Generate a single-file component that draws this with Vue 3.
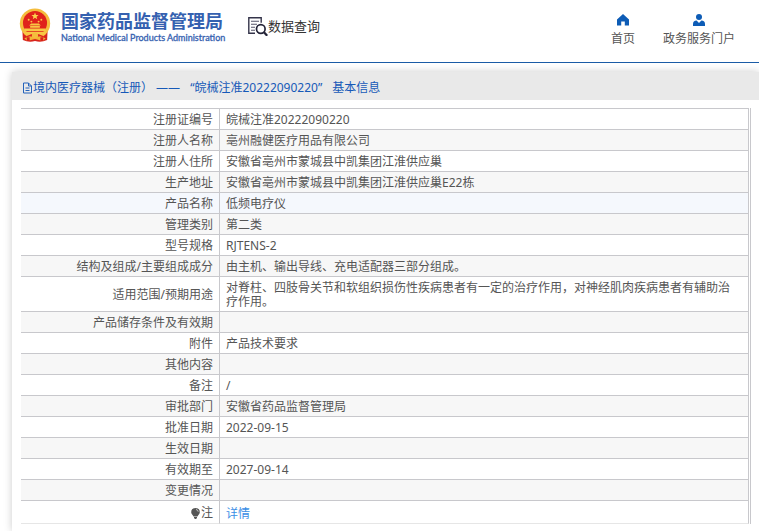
<script setup>
const rows = [
  { label: '注册证编号', value: '皖械注准20222090220' },
  { label: '注册人名称', value: '亳州融健医疗用品有限公司' },
  { label: '注册人住所', value: '安徽省亳州市蒙城县中凯集团江淮供应巢' },
  { label: '生产地址', value: '安徽省亳州市蒙城县中凯集团江淮供应巢E22栋' },
  { label: '产品名称', value: '低频电疗仪', active: true },
  { label: '管理类别', value: '第二类' },
  { label: '型号规格', value: 'RJTENS-2' },
  { label: '结构及组成/主要组成成分', value: '由主机、输出导线、充电适配器三部分组成。' },
  { label: '适用范围/预期用途', value: '对脊柱、四肢骨关节和软组织损伤性疾病患者有一定的治疗作用，对神经肌肉疾病患者有辅助治疗作用。' },
  { label: '产品储存条件及有效期', value: '' },
  { label: '附件', value: '产品技术要求' },
  { label: '其他内容', value: '' },
  { label: '备注', value: '/' },
  { label: '审批部门', value: '安徽省药品监督管理局' },
  { label: '批准日期', value: '2022-09-15' },
  { label: '生效日期', value: '' },
  { label: '有效期至', value: '2027-09-14' },
  { label: '变更情况', value: '' },
]
</script>

<template>
  <div class="page">
    <header class="header">
      <a class="brand" href="#">
        <svg class="emblem" viewBox="0 0 32 36" aria-hidden="true">
          <path d="M3 22L3.500 33Q10 36 16 34Q22 36 28.500 33L29 22Z" fill="#d8231c" />
          <circle cx="16" cy="16" r="15.600" fill="#f5bd3d" />
          <circle cx="16" cy="15.500" r="12.400" fill="#e0221b" />
          <path d="M16 4.600l1 2.500 2.700.1-2.100 1.700.7 2.600-2.300-1.500-2.300 1.500.7-2.600-2.100-1.700 2.700-.1z" fill="#fbd24e" />
          <g fill="#f8c744">
            <circle cx="9.500" cy="12" r="1" />
            <circle cx="12.300" cy="14" r="1" />
            <circle cx="19.700" cy="14" r="1" />
            <circle cx="22.500" cy="12" r="1" />
            <path d="M10 18l2-2h8l2 2zM11 18.600h10v1.600H11zM5 21h22v2.600H5z" />
            <path d="M4 24.500h24l-2 3H6z" />
          </g>
          <path d="M7 29l5-2h8l5 2-3 2-3-2h-6l-3 2z" fill="#e0221b" />
          <circle cx="16" cy="28.500" r="3.200" fill="#f5bd3d" />
          <path d="M5 31l6-2 5 2 5-2 6 2-3 3-8-2-8 2z" fill="#f3b535" />
          <path d="M9 30v4M23 30v4" stroke="#d8231c" stroke-width="3" />
        </svg>
        <span class="brand-text">
          <span class="brand-cn">国家药品监督管理局</span>
          <span class="brand-en">National Medical Products Administration</span>
        </span>
      </a>
      <a class="query" href="#">
        <svg class="query-icon" viewBox="0 0 20 20" aria-hidden="true">
          <path d="M7 17.200H.8V1.800h12.400v5" fill="none" stroke="#34344a" stroke-width="1.400" />
          <path d="M3 5.200h8M3 8.200h6M3 11.200h4M3 14.200h4" stroke="#55556a" stroke-width="1.100" />
          <circle cx="12.800" cy="13" r="4.300" fill="#fff" stroke="#242438" stroke-width="1.700" />
          <path d="M16 16.200l3.200 3.600" stroke="#242438" stroke-width="2.200" />
        </svg>
        <span>数据查询</span>
      </a>
      <nav class="nav">
        <a class="nav-item" href="#">
          <svg viewBox="0 0 12 12" aria-hidden="true">
            <path d="M6 0L12 5.400V11.400H7.800V7.400H4.200V11.400H0V5.400Z" fill="#0d5cb6" />
          </svg>
          <span>首页</span>
        </a>
        <a class="nav-item" href="#">
          <svg viewBox="0 0 12 12" aria-hidden="true">
            <circle cx="6" cy="3" r="3" fill="#0d5cb6" />
            <path d="M0 12V10Q0 7 3.600 6.600L6 9l2.400-2.400Q12 7 12 10v2z" fill="#0d5cb6" />
          </svg>
          <span>政务服务门户</span>
        </a>
      </nav>
    </header>

    <main class="panel">
      <h1 class="title">
        <svg class="title-icon" viewBox="0 0 11 12" aria-hidden="true">
          <path d="M1.500 1h5l3 3v7h-8zM6.500 1v3h3M3.500 6h4M3.500 8.500h4" fill="none" stroke="#2463bb" />
        </svg>
        <span class="title-text">
          <span>境内医疗器械（注册） ——</span>
          <span>“皖械注准20222090220”</span>
          <span>基本信息</span>
        </span>
      </h1>
      <div class="table-frame">
        <table class="info">
          <tbody>
            <tr v-for="row in rows" :key="row.label" :class="{ active: row.active }">
              <th scope="row">{{ row.label }}</th>
              <td>{{ row.value }}</td>
            </tr>
            <tr class="note">
              <th scope="row">
                <span class="note-label">
                  <svg viewBox="0 0 9 11" aria-hidden="true">
                    <path d="M4.500 0a4.300 4.300 0 0 1 4.300 4.200c0 2-1.800 2.600-2.300 4.300h-4C2 6.800.2 6.200.2 4.200A4.300 4.300 0 0 1 4.500 0zM3 9h3v1l-1 1H4l-1-1z" fill="#555" />
                    <path d="M5 1.500q2 .2 2.200 2.200" fill="none" stroke="#ddd" stroke-width=".8" />
                  </svg>
                  <span>注</span>
                </span>
              </th>
              <td><a href="#">详情</a></td>
            </tr>
          </tbody>
        </table>
      </div>
    </main>
  </div>
</template>

<style>
body {
  margin: 0;
  background: #fff;
}
</style>

<style scoped>
.page {
  display: flex;
  flex-direction: column;
  min-height: 100vh;
  overflow: hidden;
  font-family: "Noto Sans", "Noto Sans CJK SC", sans-serif;
  font-size: 12px;
  line-height: 14px;
  color: #555;
}

a {
  text-decoration: none;
  color: inherit;
}

.header {
  display: flex;
  align-items: flex-start;
  box-sizing: border-box;
  height: 63px;
  padding: 8px 24px 0 19px;
  border-bottom: 1px solid #1a5ba6;
}

.brand {
  display: flex;
  gap: 10px;
}

.emblem {
  width: 32px;
  height: 35px;
}

.brand-text {
  display: flex;
  flex-direction: column;
  width: 162px;
  padding-top: 2px;
  color: #3561b0;
  white-space: nowrap;
}

.brand-cn {
  font-family: "Noto Sans CJK SC", sans-serif;
  font-size: 18px;
  font-weight: 700;
  line-height: 20px;
}

.brand-en {
  font-family: Lato, "Liberation Sans", sans-serif;
  font-size: 9px;
  line-height: 16px;
  -webkit-text-stroke: 0.3px #3561b0;
}

.query {
  display: flex;
  align-items: center;
  margin-left: 25px;
  padding-top: 8px;
  font-size: 13px;
  line-height: 20px;
  color: #333;
}

.query-icon {
  width: 20px;
  height: 20px;
}

.nav {
  display: flex;
  gap: 28px;
  margin-left: auto;
  padding-top: 6px;
}

.nav-item {
  display: flex;
  flex-direction: column;
  align-items: center;
  gap: 6px;
}

.nav-item svg {
  width: 12px;
  height: 12px;
}

.panel {
  flex: 1;
  margin: 9px 0 0 12px;
  background: #fff;
  box-shadow: 0 0 8px #ccc;
}

.title {
  display: flex;
  align-items: center;
  box-sizing: border-box;
  height: 28px;
  margin: 0;
  padding: 3px 10px 0;
  background: #e9e9e9;
  font-size: 12px;
  font-weight: 400;
  color: #1659b8;
  white-space: nowrap;
}

.title-icon {
  width: 11px;
  height: 12px;
}

.title-text {
  display: flex;
  gap: 10px;
}

.table-frame {
  margin: 8px 8px 7px 9px;
  padding-right: 1px;
  border-right: 1px solid #c8c8cc;
}

.info {
  width: 100%;
  table-layout: fixed;
  border-spacing: 0;
  border-top: 1px solid #c8c8cc;
}

.info th,
.info td {
  height: 14px;
  padding: 4px 12px 2px 6px;
  border-right: 1px solid #c8c8cc;
  border-bottom: 1px solid #c8c8cc;
  font-weight: 400;
}

.info th {
  width: 186px;
  padding-right: 6px;
  text-align: right;
}

.info td {
  text-align: left;
}

.info tr:nth-child(even) {
  background: #f7f7f7;
}

.info tr.active {
  background: #f5f8fd;
}

.info .note th,
.info .note td {
  border-bottom-color: #e6e6e6;
}

.info .note td {
  padding-top: 6px;
}

.note-label {
  display: flex;
  align-items: center;
  justify-content: flex-end;
  gap: 1px;
}

.note-label svg {
  width: 9px;
  height: 11px;
}

.note a {
  color: #3a8ee6;
}
</style>
